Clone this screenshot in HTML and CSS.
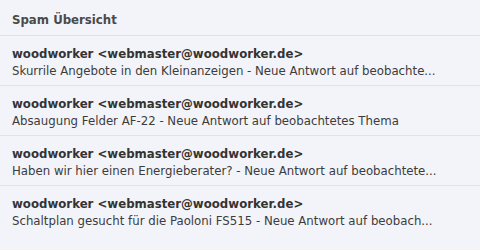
FILE: index.html
```html
<!DOCTYPE html>
<html lang="de">
<head>
<meta charset="utf-8">
<link rel="stylesheet" href="styles.css">
</head>
<body>
<div class="panel">
  <div class="header">Spam Übersicht</div>
  <ul class="list">
    <li class="item">
      <div class="from">woodworker &lt;webmaster@woodworker.de&gt;</div>
      <div class="subject">Skurrile Angebote in den Kleinanzeigen - Neue Antwort auf beobachte...</div>
    </li>
    <li class="item">
      <div class="from">woodworker &lt;webmaster@woodworker.de&gt;</div>
      <div class="subject">Absaugung Felder AF-22 - Neue Antwort auf beobachtetes Thema</div>
    </li>
    <li class="item">
      <div class="from">woodworker &lt;webmaster@woodworker.de&gt;</div>
      <div class="subject">Haben wir hier einen Energieberater? - Neue Antwort auf beobachtete...</div>
    </li>
    <li class="item">
      <div class="from">woodworker &lt;webmaster@woodworker.de&gt;</div>
      <div class="subject">Schaltplan gesucht für die Paoloni FS515 - Neue Antwort auf beobach...</div>
    </li>
  </ul>
</div>
</body>
</html>
```
FILE: styles.css
```css
html, body {
  margin: 0;
  padding: 0;
  background: #f3f4f9;
}
body {
  font-family: "DejaVu Sans", Verdana, sans-serif;
  font-size: 11.75px;
  color: #3a3a3a;
  width: 480px;
  height: 250px;
  overflow: hidden;
}
.header {
  height: 36px;
  box-sizing: border-box;
  padding: 12px 12px 0;
  font-weight: bold;
  line-height: 16px;
  color: #4a4a4a;
  border-bottom: 1px solid #e1e2e8;
}
.list {
  list-style: none;
  margin: 0;
  padding: 0;
}
.item {
  height: 50px;
  box-sizing: border-box;
  padding: 10px 12px 0;
  border-bottom: 1px solid #e1e2e8;
}
.item:last-child {
  border-bottom: none;
}
.from {
  font-weight: bold;
  line-height: 16px;
  color: #333;
}
.subject {
  line-height: 19px;
  color: #3c3c3c;
}
```
